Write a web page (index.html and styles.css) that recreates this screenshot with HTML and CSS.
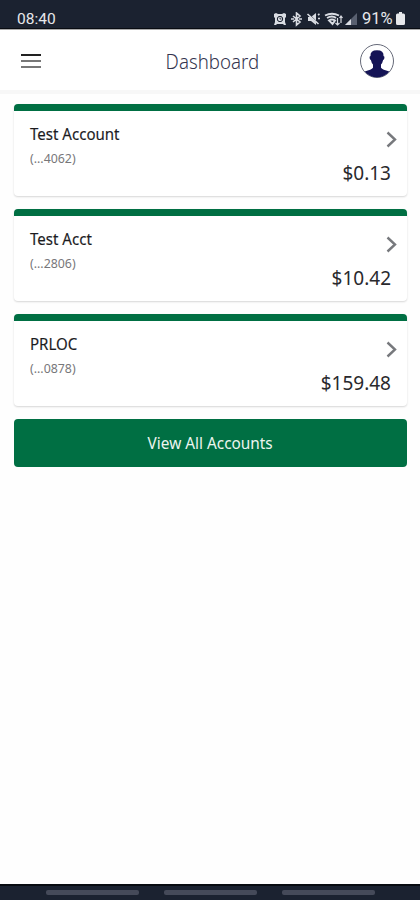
FILE: index.html
```
<!DOCTYPE html>
<html lang="en">
<head>
<meta charset="utf-8">
<title>Dashboard</title>
<link rel="stylesheet" href="styles.css">
</head>
<body>
<div class="statusbar">
  <span class="time">08:40</span>
  <div class="indicators">
    <svg class="status-icons" width="88" height="16" viewBox="0 0 88 16" fill="none" stroke="#d9dce2" stroke-width="1.600">
      <path d="M1 2l2-1 2 1h4l2-1 2 1v3l-1 1v4l1 3h-2l-1-1H4l-1 1H1l1-3V6L1 5z" fill="#d9dce2" stroke="none"/>
      <circle cx="7" cy="7" r="2.700" stroke="#1b2230" stroke-width="1"/>
      <path d="M7 5.500V7h1.500" stroke="#1b2230" stroke-width=".8"/>
      <path d="M20 4l7 6-3.500 3V1L27 4l-7 6M18 7h3M26 7h3"/>
      <path d="M35 5h3l5-4v12l-5-4h-3z" fill="#d9dce2" stroke="none"/>
      <path d="M34.500 1l12 12" stroke="#1b2230" stroke-width="1.200"/>
      <path d="M34.500 2l11 10M45 3l1.500-1M45 6.500h2"/>
      <path d="M52 3.500q7-3.500 14 0M54 6q5-3 9 0M56 8.500q3-2 6 0l-2.500 3.500z" stroke-width="1.900"/>
      <path d="M64.500 6v7m-2-2l2 2 2-2M68 11V4m-1.500 2L68 4l1.500 2" stroke-width="1.200"/>
      <path d="M72 13L84 1v12z" fill="#596070" stroke="none"/>
      <path d="M72 13l6-6v6z" fill="#d9dce2" stroke="none"/>
    </svg>
    <span class="percent">91%</span>
    <svg class="battery" width="9" height="13" viewBox="0 0 9 13"><path d="M3 0h3v1.500h1.500Q9 1.500 9 3v8.500Q9 13 7.500 13h-6Q0 13 0 11.500V3q0-1.500 1.500-1.500H3z" fill="#e7e8eb"/></svg>
  </div>
</div>
<header class="appbar">
  <div class="menu"><i></i><i></i><i></i></div>
  <h1><span>Dashboard</span></h1>
  <svg class="avatar" width="36" height="36" viewBox="0 0 36 36">
    <circle cx="18" cy="18" r="16.500" fill="#fff" stroke="#666a79" stroke-width="1"/>
    <path d="M11.500 13Q11 7.300 18 7.300T24.500 13q1.500.2.800 2.600-.3 1.400-1.200 1.500-.5 2.800-2.100 4.400v3.200q1.500 1.900 8.300 3.800Q25.500 34.300 18 34.300T5.700 28.500q6.800-1.900 8.300-3.800v-3.200q-1.600-1.600-2.100-4.400-.9-.1-1.200-1.500-.7-2.400.8-2.600z" fill="#151456"/>
  </svg>
</header>
<main>
  <section class="card">
    <div class="details"><h2>Test Account</h2><p>(...4062)</p></div>
    <div class="summary"><svg class="chevron" width="12" height="17" viewBox="0 0 12 17"><path d="M1.500 1.500l7.500 7-7.500 7"/></svg><strong>$0.13</strong></div>
  </section>
  <section class="card">
    <div class="details"><h2>Test Acct</h2><p>(...2806)</p></div>
    <div class="summary"><svg class="chevron" width="12" height="17" viewBox="0 0 12 17"><path d="M1.500 1.500l7.500 7-7.500 7"/></svg><strong>$10.42</strong></div>
  </section>
  <section class="card">
    <div class="details"><h2>PRLOC</h2><p>(...0878)</p></div>
    <div class="summary"><svg class="chevron" width="12" height="17" viewBox="0 0 12 17"><path d="M1.500 1.500l7.500 7-7.500 7"/></svg><strong>$159.48</strong></div>
  </section>
  <button class="view-all"><span>View All Accounts</span></button>
</main>
<footer><i></i><i></i><i></i></footer>
</body>
</html>
```
FILE: styles.css
```
* { box-sizing: border-box; }
body {
  margin: 0;
  height: 900px;
  display: flex;
  flex-direction: column;
  overflow: hidden;
  background: #fefefe;
  color: #202024;
  font-family: "Noto Sans", "Open Sans", sans-serif;
}
h1, h2, p, strong { margin: 0; font-weight: 400; white-space: nowrap; }
span { display: inline-block; white-space: nowrap; }
svg { display: block; flex: none; }
.statusbar {
  height: 29px;
  flex: none;
  display: flex;
  justify-content: space-between;
  padding: 9px 15px 0 17px;
  background: #1b2230;
  border-bottom: 1px solid #090c12;
  color: #e7e8eb;
}
.time { font: 400 15.5px/20px Roboto, sans-serif; }
.indicators { display: flex; align-items: flex-start; }
.status-icons { margin-top: 3px; }
.percent { width: 35px; font: 400 16.5px/20px Roboto, sans-serif; padding-left: 1px; }
.battery { margin-top: 3px; }
.appbar {
  height: 65px;
  flex: none;
  display: grid;
  grid-template-columns: 60px 1fr 61px;
  align-items: center;
  padding-top: 1px;
  background: #fff;
  border-top: 1px solid #aaa;
  border-bottom: 4px solid #f7f7f7;
}
.menu { display: flex; flex-direction: column; gap: 4px; padding-left: 21px; }
.menu i { width: 20px; height: 2px; background: #777; }
.menu i:first-child { background: #222; }
.appbar h1 { text-align: center; padding-left: 6px; font-size: 20.5px; font-weight: 300; line-height: 26px; color: #34354f; }
.appbar h1 span { transform: scaleX(.91); }
main { flex: 1; display: flex; flex-direction: column; padding: 10px 13px 0; }
.card {
  height: 92px;
  margin: 0 0 13px 1px;
  flex: none;
  display: flex;
  justify-content: space-between;
  background: #fff;
  border-top: 7px solid #006f43;
  border-radius: 4px;
  box-shadow: 0 1px 2px rgba(0, 0, 0, .16);
}
.details { padding: 12px 0 0 16px; }
.details h2 { transform: scaleX(.94); transform-origin: left; font-size: 16px; line-height: 22px; color: #1c1c1f; -webkit-text-stroke: .15px #1c1c1f; }
.details p { transform: scaleX(.95); transform-origin: left; margin-top: 4px; font-size: 13px; line-height: 18px; color: #77777a; }
.summary { display: flex; flex-direction: column; align-items: flex-end; padding: 20px 9px 0 0; }
.chevron { fill: none; stroke: #77797d; stroke-width: 2.400; }
.summary strong { margin: 12px 7px 0 0; font-size: 19px; line-height: 26px; color: #29292d; }
.view-all {
  height: 48px;
  margin: 0 0 0 1px;
  padding: 0;
  flex: none;
  border: 0;
  border-radius: 4px;
  background: #006f43;
  color: #edf5ef;
  font: 400 16px/24px "Noto Sans", sans-serif;
}
.view-all span { transform: scaleX(.96); }
footer {
  height: 16px;
  flex: none;
  display: flex;
  gap: 25px;
  padding: 4px 0 0 46px;
  background: #1b2230;
  border-top: 2px solid #080b11;
}
footer i { width: 93px; height: 5px; border-radius: 2px; background: #454a59; }
```
